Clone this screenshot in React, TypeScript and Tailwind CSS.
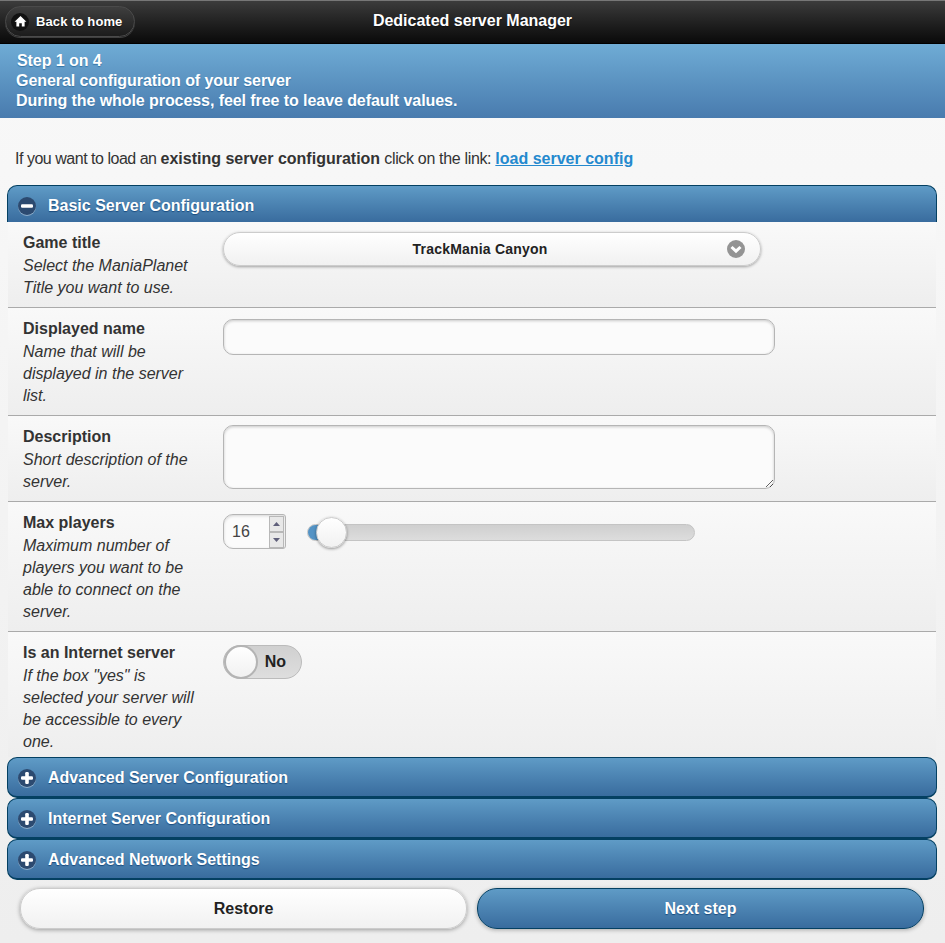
import type { ReactNode } from 'react'

const blueBar = 'bg-gradient-to-b from-[#5f9bc6] to-[#396c9e] border border-[#044062] text-white font-bold [text-shadow:0_1px_1px_#194b7e]'
const fieldBox = 'bg-[#fbfbfb] border border-[#b5b5b5] rounded-[10px] shadow-[inset_0_1px_3px_rgba(0,0,0,0.2)] outline-none'

function RoundIcon({ type }: { type: 'plus' | 'minus' }) {
  return (
    <span className="size-[18px] rounded-full bg-[#2c4a70] shadow-[0_1px_0_rgba(255,255,255,0.4)] flex items-center justify-center shrink-0">
      <svg width="14" height="14" viewBox="0 0 14 14" fill="#fff">
        <rect x="1" y="5.2" width="12" height="3.6" rx="1.2" />
        {type === 'plus' && <rect x="5.2" y="1" width="3.6" height="12" rx="1.2" />}
      </svg>
    </span>
  )
}

function SectionBar({ title, open }: { title: string; open?: boolean }) {
  return (
    <div
      className={`${blueBar} flex items-center gap-[12px] pl-[10px] text-[16px] ${
        open ? 'h-[37px] rounded-t-[10px] border-b-0 pt-[3px]' : 'h-[41px] pt-px rounded-[10px] border-b-2'
      }`}
    >
      <RoundIcon type={open ? 'minus' : 'plus'} />
      {title}
    </div>
  )
}

function Row({ title, desc, last, children }: { title: string; desc: ReactNode; last?: boolean; children: ReactNode }) {
  return (
    <div
      className={`grid grid-cols-[200px_1fr] pl-[15px] pt-[10px] bg-gradient-to-b from-[#f9f9f9] to-[#eeeeee] ${
        last ? 'pb-[4px]' : 'pb-[8px] border-b border-[#aaaaaa]'
      }`}
    >
      <div className="w-[176px] text-[16px] leading-[22px] text-[#333333]">
        <p className="font-bold mb-px">{title}</p>
        <p className="italic">{desc}</p>
      </div>
      <div>{children}</div>
    </div>
  )
}

export default function App() {
  return (
    <div className="h-[943px] w-[945px] overflow-hidden bg-gradient-to-b from-[#f9f9f9] to-[#eeeeee] font-['Liberation_Sans',Arial,sans-serif] text-[#333333]">

      {/* Header */}
      <header className="h-[44px] pb-[2px] relative flex items-center justify-center border-t border-[#777777] border-b border-b-[#000000] bg-gradient-to-b from-[#3c3c3c] to-[#0a0a0a] text-white font-bold text-[16px] [text-shadow:0_1px_1px_#111]">
        <a className="absolute left-[5px] top-[5px] h-[31px] w-[130px] rounded-full border border-[#4a4a4a] bg-gradient-to-b from-[#3f3f3f] to-[#1c1c1c] flex items-center gap-[7px] pl-[5px] text-[13px] tracking-[0.1px] shadow-[0_1px_0_rgba(255,255,255,0.2)]">
          <span className="size-[18px] rounded-full bg-[#111111] flex items-center justify-center">
            <svg width="13" height="13" viewBox="0 0 12 12" fill="#fff">
              <path d="M6 1 L11.5 6.2 L9.8 6.2 L9.8 10.5 L7.2 10.5 L7.2 7.5 L4.8 7.5 L4.8 10.5 L2.2 10.5 L2.2 6.2 L0.5 6.2 Z" />
            </svg>
          </span>
          Back to home
        </a>
        Dedicated server Manager
      </header>

      {/* Step banner */}
      <div className="h-[74px] pt-[7px] pl-[16px] bg-gradient-to-b from-[#6facd5] to-[#497bae] text-white font-bold text-[16px] leading-[20px] tracking-[-0.07px] [text-shadow:0_1px_1px_#3373a5]">
        <p className="pl-px">Step 1 on 4</p>
        <p>General configuration of your server</p>
        <p>During the whole process, feel free to leave default values.</p>
      </div>

      <p className="pt-[30px] pl-[15px] h-[67px] text-[16px] leading-[22px]">
        <span className="tracking-[-0.48px]">If you want to load an </span>
        <b>existing server configuration</b>
        <span className="tracking-[-0.33px]"> click on the link: </span>
        <a className="font-bold text-[#2489ce] underline">load server config</a>
      </p>

      {/* Accordion */}
      <div className="mx-[7px] w-[930px]">
        <SectionBar title="Basic Server Configuration" open />
        <div className="ml-px mr-px">
          <Row title="Game title" desc="Select the ManiaPlanet Title you want to use.">
            <div className="relative w-[538px] h-[34px] pr-[24px] rounded-full border border-[#cccccc] bg-gradient-to-b from-[#ffffff] to-[#f1f1f1] shadow-[0_1px_3px_rgba(0,0,0,0.35)] flex items-center justify-center text-[14px] font-bold tracking-[0.2px] text-[#222222]">
              TrackMania Canyon
              <span className="absolute right-[15px] top-[7px] size-[18px] rounded-full bg-[#949494] flex items-center justify-center">
                <svg width="14" height="14" viewBox="0 0 14 14" fill="none" stroke="#fff" strokeWidth="3">
                  <path d="M2.5 5 L7 9.2 L11.5 5" />
                </svg>
              </span>
            </div>
          </Row>

          <Row title="Displayed name" desc="Name that will be displayed in the server list.">
            <input className={`${fieldBox} block w-[552px] h-[36px] mt-px`} />
          </Row>

          <Row title="Description" desc="Short description of the server.">
            <textarea className={`${fieldBox} block w-[552px] h-[64px] -mt-px`} />
          </Row>

          <Row title="Max players" desc="Maximum number of players you want to be able to connect on the server.">
            <div className="flex items-start mt-[2px]">
              <div className="w-[63px] h-[35px] rounded-l-[10px] rounded-r-[3px] border border-[#b5b5b5] bg-[#fbfbfb] shadow-[inset_0_1px_3px_rgba(0,0,0,0.15)] flex items-center justify-between pl-[8px] pr-[1px] text-[16px] text-[#444444]">
                16
                <div className="flex flex-col w-[15px] h-[32px]">
                  <span className="flex-1 border border-[#b8b8b8] bg-[#e8e8e8] flex items-center justify-center">
                    <svg width="7" height="4" viewBox="0 0 7 4" fill="#5f5f7a"><path d="M3.5 0 L7 4 L0 4 Z" /></svg>
                  </span>
                  <span className="flex-1 border border-[#b8b8b8] bg-[#e8e8e8] flex items-center justify-center">
                    <svg width="7" height="4" viewBox="0 0 7 4" fill="#5f5f7a"><path d="M0 0 L7 0 L3.5 4 Z" /></svg>
                  </span>
                </div>
              </div>
              <div className="relative ml-[21px] mt-[10px] w-[388px] h-[17px] rounded-full border border-[#c4c4c4] bg-gradient-to-b from-[#cfcfcf] to-[#dddddd]">
                <div className="h-full w-[24px] rounded-l-full bg-[#5393c5]" />
                <div className="absolute left-[8px] top-[-8px] size-[31px] rounded-full border border-[#cccccc] bg-gradient-to-b from-[#ffffff] to-[#f1f1f1] shadow-[0_1px_3px_rgba(0,0,0,0.4)]" />
              </div>
            </div>
          </Row>

          <Row title="Is an Internet server" desc={'If the box "yes" is selected your server will be accessible to every one.'} last>
            <div className="relative mt-[3px] w-[79px] h-[34px] rounded-full border border-[#bbbbbb] bg-gradient-to-b from-[#d0d0d0] to-[#dedede] flex items-center justify-end pr-[15px] text-[16px] font-bold text-[#222222]">
              No
              <span className="absolute left-0 top-[-1px] size-[34px] rounded-full border-2 border-[#b4b4b4] bg-gradient-to-b from-[#ffffff] to-[#f1f1f1]" />
            </div>
          </Row>
        </div>

        <SectionBar title="Advanced Server Configuration" />
        <SectionBar title="Internet Server Configuration" />
        <SectionBar title="Advanced Network Settings" />
      </div>

      {/* Actions */}
      <div className="mt-[8px] ml-[20px] flex gap-[10px]">
        <button className="w-[447px] h-[41px] rounded-[20px] border border-[#cccccc] bg-gradient-to-b from-[#ffffff] to-[#f1f1f1] shadow-[0_1px_4px_rgba(0,0,0,0.35)] text-[16px] font-bold text-[#222222]">
          Restore
        </button>
        <button className={`${blueBar} w-[447px] h-[41px] rounded-[20px] text-[16px] shadow-[0_1px_4px_rgba(0,0,0,0.3)]`}>
          Next step
        </button>
      </div>
    </div>
  )
}
